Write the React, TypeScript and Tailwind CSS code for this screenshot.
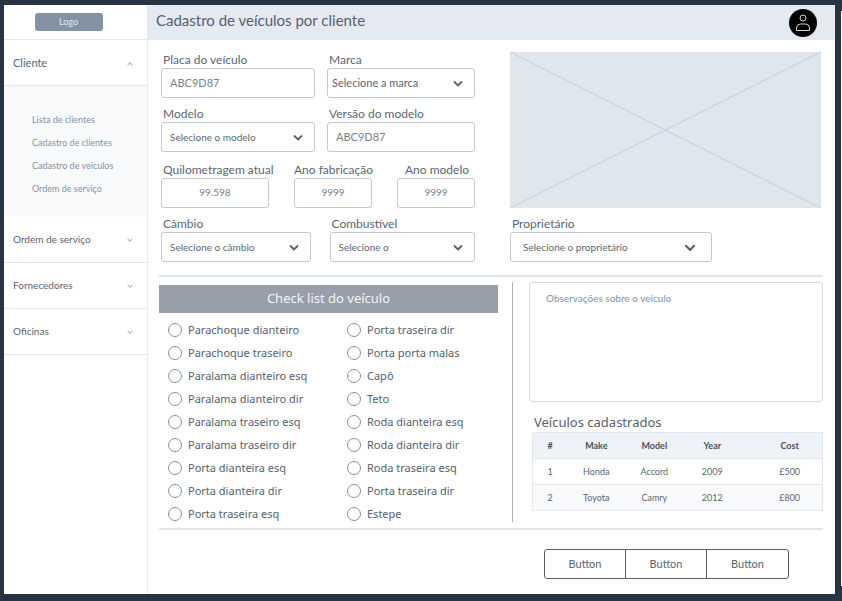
import { useId, type ReactNode } from "react";

const submenu = ["Lista de clientes", "Cadastro de clientes", "Cadastro de veículos", "Ordem de serviço"];
const sections = ["Ordem de serviço", "Fornecedores", "Oficinas"];

const checklist = [
  ["Parachoque dianteiro", "Porta traseira dir"],
  ["Parachoque traseiro", "Porta porta malas"],
  ["Paralama dianteiro esq", "Capô"],
  ["Paralama dianteiro dir", "Teto"],
  ["Paralama traseiro esq", "Roda dianteira esq"],
  ["Paralama traseiro dir", "Roda dianteira dir"],
  ["Porta dianteira esq", "Roda traseira esq"],
  ["Porta dianteira dir", "Porta traseira dir"],
  ["Porta traseira esq", "Estepe"],
];

const vehicles = [
  ["1", "Honda", "Accord", "2009", "£500"],
  ["2", "Toyota", "Camry", "2012", "£800"],
];

function Chevron({ className, up = false }: { className: string; up?: boolean }) {
  return (
    <svg viewBox="0 0 10 6" className={className} fill="none" stroke="currentColor" strokeWidth="1.8" aria-hidden="true">
      <path d={up ? "M1 5 5 1l4 4" : "M1 1l4 4 4-4"} />
    </svg>
  );
}

function Field({ id, label, labelClass = "pl-0.5", children }: { id: string; label: string; labelClass?: string; children: ReactNode }) {
  return (
    <div className="min-w-0">
      <label htmlFor={id} className={`block whitespace-nowrap text-[12px] leading-4 text-[#5b6673] ${labelClass}`}>
        {label}
      </label>
      {children}
    </div>
  );
}

function TextField({ label, value, labelClass, inputClass = "px-2 text-[11px]" }: { label: string; value: string; labelClass?: string; inputClass?: string }) {
  const id = useId();
  return (
    <Field id={id} label={label} labelClass={labelClass}>
      <input
        id={id}
        placeholder={value}
        className={`block h-[30px] w-full rounded-[3px] border border-[#c0c9d8] bg-white pb-0.5 text-[#6f7a87] placeholder:text-[#76818f] ${inputClass}`}
      />
    </Field>
  );
}

function SelectField({ label, value, selectClass = "pl-2 text-[10px]", iconClass = "right-3 w-[10px]" }: { label: string; value: string; selectClass?: string; iconClass?: string }) {
  const id = useId();
  return (
    <Field id={id} label={label}>
      <div className="relative">
        <select
          id={id}
          className={`block h-[30px] w-full appearance-none rounded-[3px] border border-[#c0c9d8] bg-white pr-7 text-[#5b6673] ${selectClass}`}
        >
          <option>{value}</option>
        </select>
        <Chevron className={`pointer-events-none absolute top-3 h-[7px] text-[#56616e] ${iconClass}`} />
      </div>
    </Field>
  );
}

function Sidebar() {
  return (
    <nav className="w-36 shrink-0 border-r border-[#e6ebf2] bg-white text-[10px] text-[#5b6673]">
      <div className="flex h-[35px] items-center justify-center border-b border-[#e2e8f0] pr-[14px]">
        <a href="#" className="flex h-[18px] w-[68px] items-center justify-center rounded-[3px] bg-[#8492a6] text-[9px] text-[#e5e9f2]">
          Logo
        </a>
      </div>
      <button type="button" className="flex h-[46px] w-full items-center justify-between border-b border-[#e2e8f0] pt-0.5 pr-[14px] pl-[9px] text-[11px]">
        Cliente
        <Chevron up className="h-[4px] w-[6px] text-[#b3bdcd]" />
      </button>
      <ul className="flex h-[131px] flex-col bg-[#f9fafc] pt-[22px] pl-7 text-[9px] leading-[23px] text-[#8492a6]">
        {submenu.map((item) => (
          <li key={item}>
            <a href="#">{item}</a>
          </li>
        ))}
      </ul>
      {sections.map((item) => (
        <button key={item} type="button" className="flex h-[46px] w-full items-center justify-between border-b border-[#e2e8f0] pr-[14px] pl-[9px]">
          {item}
          <Chevron className="h-[4px] w-[6px] text-[#b3bdcd]" />
        </button>
      ))}
    </nav>
  );
}

function Header() {
  return (
    <header className="flex h-[35px] items-center justify-between bg-[#e5e9f2] pr-[18px] pl-2">
      <h1 className="pb-1 text-[15px] text-[#56616e]">Cadastro de veículos por cliente</h1>
      <button type="button" aria-label="Perfil" className="flex size-7 items-center justify-center rounded-full bg-black">
        <svg viewBox="0 0 28 28" className="size-7" fill="none" stroke="#d5d5d5" strokeWidth="1">
          <circle cx="14" cy="9" r="3" />
          <path d="M7.5 21.5v-2.5q0-4 4-4h5q4 0 4 4v2.5z" />
        </svg>
      </button>
    </header>
  );
}

function VehicleForm() {
  return (
    <div className="grid grid-cols-[314fr_311fr] gap-[35px] px-0.5">
      <div className="flex flex-col gap-[10px]">
        <div className="flex flex-col gap-2">
          <div className="grid grid-cols-[154fr_148fr] gap-3">
            <TextField label="Placa do veículo" value="ABC9D87" />
            <SelectField label="Marca" value="Selecione a marca" selectClass="pl-1 text-[11px]" />
          </div>
          <div className="grid grid-cols-[154fr_148fr] gap-3">
            <SelectField label="Modelo" value="Selecione o modelo" />
            <TextField label="Versão do modelo" value="ABC9D87" />
          </div>
        </div>
        <div className="flex flex-col gap-2">
          <div className="grid grid-cols-[108fr_78fr_78fr] gap-[25px]">
            <TextField label="Quilometragem atual" value="99.598" inputClass="text-center text-[10px]" />
            <TextField label="Ano fabricação" value="9999" labelClass="pl-0" inputClass="text-center text-[10px]" />
            <TextField label="Ano modelo" value="9999" labelClass="pl-2" inputClass="text-center text-[10px]" />
          </div>
          <div className="grid grid-cols-[149fr_145fr] gap-[19px]">
            <SelectField label="Câmbio" value="Selecione o câmbio" />
            <SelectField label="Combustível" value="Selecione o" />
          </div>
        </div>
      </div>
      <div className="flex flex-col gap-2">
        <svg viewBox="0 0 311 156" preserveAspectRatio="none" className="h-[156px] w-full bg-[#e0e6ed]" role="img" aria-label="Foto do veículo">
          <path d="M0 0 311 156M0 156 311 0" stroke="#c5cddd" strokeWidth="1" />
        </svg>
        <div className="w-[65%]">
          <SelectField label="Proprietário" value="Selecione o proprietário" selectClass="pl-3 text-[10px]" iconClass="right-4 w-3" />
        </div>
      </div>
    </div>
  );
}

function Checklist() {
  return (
    <fieldset className="min-w-0 flex-1 font-['Noto_Sans',sans-serif]">
      <legend className="flex h-7 w-full items-center justify-center bg-[#989eaa] text-[13px] text-[#f3f5f8]">Check list do veículo</legend>
      <div className="grid grid-cols-[179fr_151fr] pt-[5px] pl-[9px]">
        {checklist.flatMap((row, r) =>
          row.map((item, c) => (
            <label key={`${r}-${c}`} className="flex h-[23px] items-center gap-[6px] whitespace-nowrap text-[11px] text-[#56616e]">
              <input type="radio" name={`item-${r}-${c}`} className="size-[14px] appearance-none rounded-full border border-[#8492a6] bg-white checked:bg-[#8492a6]" />
              <span className="pt-0.5">{item}</span>
            </label>
          )),
        )}
      </div>
    </fieldset>
  );
}

function VehicleTable() {
  return (
    <table className="w-full table-fixed border-collapse border border-[#e2e8f0] text-center text-[9px] text-[#5b6673]">
      <colgroup>
        <col className="w-[12%]" />
        <col className="w-[20%]" />
        <col className="w-[20%]" />
        <col className="w-[20%]" />
        <col className="w-[28%]" />
      </colgroup>
      <thead>
        <tr className="h-[26px] border-b border-[#e2e8f0] bg-[#eff2f7] text-[#47525f]">
          {["#", "Make", "Model", "Year", "Cost"].map((h) => (
            <th key={h} scope="col" className="p-0 font-bold last:pl-4">
              {h}
            </th>
          ))}
        </tr>
      </thead>
      <tbody>
        {vehicles.map((row) => (
          <tr key={row[0]} className="h-[26px] border-b border-[#e2e8f0] even:bg-[#f9fafc]">
            {row.map((cell) => (
              <td key={cell} className="p-0 last:pl-4">
                {cell}
              </td>
            ))}
          </tr>
        ))}
      </tbody>
    </table>
  );
}

export default function App() {
  return (
    <div className="flex min-h-screen bg-[#273444] pt-[5px] pb-[7px] pl-1 font-[Lato,sans-serif]">
      <Sidebar />
      <div className="min-w-0 flex-1 bg-white">
        <Header />
        <main className="pt-3 pr-3 pl-[11px]">
          <VehicleForm />
          <hr className="mt-[13px] border-t-2 border-[#e0e6ed]" />
          <div className="flex pt-[5px] pb-[3px]">
            <div className="flex min-w-0 flex-[339] pt-[3px]">
              <Checklist />
            </div>
            <div className="mr-4 ml-[14px] h-[240px] w-px bg-[#a9b5c2]" />
            <div className="min-w-0 flex-[294]">
              <textarea
                aria-label="Observações sobre o veículo"
                placeholder="Observações sobre o veículo"
                className="block h-[120px] w-full resize-none rounded-[3px] border border-[#d3dae3] bg-white px-4 py-[7px] text-[10px] leading-4 text-[#5b6673] placeholder:text-[#8492a6]"
              />
              <div className="pt-[10px] pl-[3px]">
                <h2 className="pl-0.5 font-['Noto_Sans',sans-serif] text-[13px] leading-5 text-[#56616e]">Veículos cadastrados</h2>
                <VehicleTable />
              </div>
            </div>
          </div>
          <hr className="border-t-2 border-[#e0e6ed]" />
          <div className="flex justify-end pt-[19px] pr-[34px] pb-[15px]">
            <div className="flex h-[30px] divide-x divide-[#56616e] rounded-[3px] border border-[#56616e] text-[11px] text-[#5b6673]">
              {[1, 2, 3].map((n) => (
                <button key={n} type="button" className="w-[81px]">
                  Button
                </button>
              ))}
            </div>
          </div>
        </main>
      </div>
      <div className="mt-[6px] mb-2 w-[7px] border-r border-white" />
    </div>
  );
}
